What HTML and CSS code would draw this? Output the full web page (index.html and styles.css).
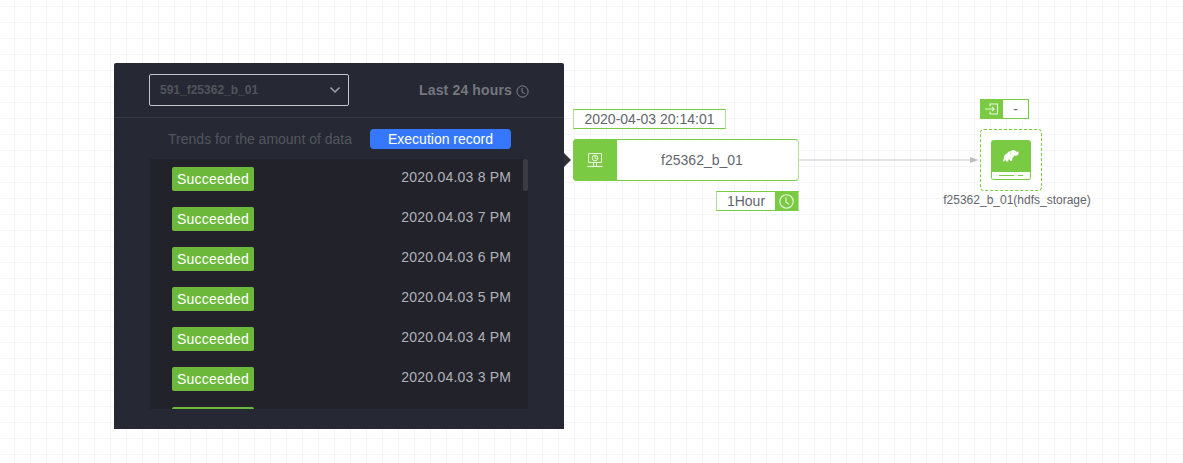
FILE: index.html
```html
<!DOCTYPE html>
<html lang="en">
<head>
<meta charset="utf-8">
<title>Data flow</title>
<link rel="stylesheet" href="styles.css">
</head>
<body>
<main class="canvas">
  <section class="panel">
    <header class="panel-head">
      <div class="select"><span>591_f25362_b_01</span>
        <svg width="12" height="8" viewBox="0 0 12 8"><path d="M1.5 1.500 6 6l4.500-4.500" fill="none" stroke="#a0a2aa" stroke-width="1.500"/></svg>
      </div>
      <div class="range"><span>Last 24 hours</span>
        <svg width="13" height="13" viewBox="0 0 13 13" fill="none" stroke="#85868d"><circle cx="6.500" cy="6.500" r="5.600"/><path d="M6 3v4l2.800 1.700"/></svg>
      </div>
    </header>
    <nav class="tabs"><span class="tab">Trends for the amount of data</span><span class="tab active">Execution record</span></nav>
    <div class="records">
      <div class="record"><span class="tag">Succeeded</span><time>2020.04.03 8 PM</time></div>
      <div class="record"><span class="tag">Succeeded</span><time>2020.04.03 7 PM</time></div>
      <div class="record"><span class="tag">Succeeded</span><time>2020.04.03 6 PM</time></div>
      <div class="record"><span class="tag">Succeeded</span><time>2020.04.03 5 PM</time></div>
      <div class="record"><span class="tag">Succeeded</span><time>2020.04.03 4 PM</time></div>
      <div class="record"><span class="tag">Succeeded</span><time>2020.04.03 3 PM</time></div>
      <div class="record"><span class="tag"></span></div>
      <i class="thumb"></i>
    </div>
    <i class="pointer"></i>
  </section>

  <section class="task">
    <div class="stamp">2020-04-03 20:14:01</div>
    <div class="node">
      <div class="node-icon">
        <svg width="16" height="16" viewBox="0 0 16 16" fill="none" stroke="#e9f7e0"><path d="M1.500 1.500h13v9h-13zM6.500 11v3M9.500 11v3"/><path d="M.5 14.500h15" stroke-width="1.200"/><circle cx="8" cy="6" r="2.800"/><path d="M8 4v2.300h1.500"/></svg>
      </div>
      <div class="node-name">f25362_b_01</div>
    </div>
    <div class="period"><span>1Hour</span>
      <div class="period-icon"><svg width="15" height="15" viewBox="0 0 15 15" fill="none" stroke="#e9f7e0" stroke-width="1.100"><circle cx="7.500" cy="7.500" r="6.700"/><path d="M7 3.200v5l3.200 2"/></svg></div>
    </div>
  </section>

  <svg class="link" width="181" height="8" viewBox="0 0 181 8"><path d="M0 4h174" stroke="#d8d9df" stroke-width="1.500"/><path d="m172 1 8.500 3-8.500 3z" fill="#bcbec5"/></svg>

  <section class="storage">
    <div class="io">
      <div class="io-icon"><svg width="14" height="12" viewBox="0 0 14 12" fill="none" stroke="#e9f7e0" stroke-width="1.100"><path d="M5 3.500V1h7.500v10H5V8.500M0 6h9M7 3.800 9.200 6 7 8.200"/></svg></div>
      <span>-</span>
    </div>
    <div class="drop">
      <svg width="40" height="40" viewBox="0 0 40 40">
        <rect width="40" height="40" rx="3" fill="#7acb43"/>
        <path d="M1 32h38v5.500q0 1.500-1.500 1.500h-35Q1 39 1 37.500z" fill="#fff"/>
        <path d="M8 35.500h15M27 35.500h5" stroke="#7acb43"/>
        <path d="M13 17.500q0-3 3-4 1-2.500 4-2.500.8-1.200 2.500-1 2 0 2.500 1.500l1.400.4.600-1q1.300 2.500-.2 4.200-1.500 1.200-3.500.4l-.8 1.500-1 .5-.5 3.500h-2l-.2-1.800-1.300.2-.3 2.100h-2l-.2-2-1 1.500-1-.6v1h-1z" fill="#fff"/>
        <path d="M19.500 11.500q-.5 3 2 3.500M23.500 12.500v.8" fill="none" stroke="#a8dc84" stroke-width=".6"/>
      </svg>
    </div>
    <div class="storage-name">f25362_b_01(hdfs_storage)</div>
  </section>
</main>
</body>
</html>
```
FILE: styles.css
```css
* { box-sizing: border-box; }
body { margin: 0; font: 14px/20px "Liberation Sans", Arial, sans-serif; color: #63656e; }
svg { display: block; flex: none; }
.canvas {
  position: relative; height: 463px; overflow: hidden; background-color: #fff;
  background-image: linear-gradient(#f5f5f5 1px, transparent 1px), linear-gradient(90deg, #f5f5f5 1px, transparent 1px);
  background-size: 16px 16px; background-position: 14px 6px;
}
.panel { position: absolute; left: 114px; top: 63px; width: 450px; height: 366px; background: #262833; border-radius: 2px 2px 0 0; }
.panel-head { display: flex; align-items: center; justify-content: space-between; height: 55px; padding: 0 35px; border-bottom: 1px solid #373944; }
.select { display: flex; align-items: center; justify-content: space-between; width: 200px; height: 32px; padding: 0 7px 0 10px; border: 1px solid #c4c6cc; border-radius: 2px; font-size: 12px; font-weight: bold; color: #52545d; }
.range { display: flex; align-items: center; gap: 4px; font-weight: bold; letter-spacing: .15px; color: #75777e; }
.range svg { margin-top: 2px; }
.tabs { display: flex; justify-content: flex-end; gap: 18px; padding: 11px 53px 0 0; }
.tab { height: 20px; color: #54565f; white-space: nowrap; }
.tab.active { width: 141px; border-radius: 4px; background: #3578ff; color: #fff; text-align: center; }
.records { position: relative; height: 250px; margin: 10px 36px 0; padding-top: 8px; overflow: hidden; background: #22222a; }
.record { display: flex; justify-content: space-between; height: 40px; padding: 0 17px 0 22px; color: #b0b2ba; }
.record time { letter-spacing: .22px; margin-right: -.22px; }
.tag { width: 82px; height: 24px; border-radius: 2px; background: #6bb83a; color: #fff; line-height: 25px; letter-spacing: .2px; text-align: center; }
.thumb { position: absolute; top: 0; right: 0; width: 5px; height: 32px; border-radius: 2px; background: #3c3c44; }
.pointer { position: absolute; left: 450px; top: 90px; border: 7px solid transparent; border-left-color: #303036; border-right: 0; }
.task { position: absolute; left: 573px; top: 109px; width: 226px; display: flex; flex-direction: column; align-items: flex-start; gap: 10px; }
.stamp { width: 153px; height: 20px; border: 1px solid; border-color: #7acb43 #b4e292; background: #fff; line-height: 19px; text-align: center; }
.node { display: flex; width: 226px; height: 42px; border: 1px solid; border-color: #7acb43 #b4e292; border-radius: 4px; background: #fff; }
.node-icon { display: flex; align-items: center; justify-content: center; width: 44px; margin: -1px 0 -1px -1px; border-radius: 4px 0 0 4px; background: #7acb43; }
.node-name { flex: 1; padding-right: 11px; line-height: 41px; text-align: center; }
.period { align-self: flex-end; display: flex; width: 83px; height: 20px; border: 1px solid; border-color: #7acb43 #b4e292; background: #fff; line-height: 19px; }
.period span { flex: 1; text-align: center; }
.period-icon { display: flex; align-items: center; justify-content: center; width: 23px; background: #7acb43; }
.link { position: absolute; left: 798px; top: 156px; }
.storage { position: absolute; left: 937px; top: 99px; width: 160px; }
.io { display: flex; width: 49px; height: 20px; margin-left: 43px; border: 1px solid #7acb43; background: #fff; line-height: 18px; text-align: center; }
.io-icon { display: flex; align-items: center; justify-content: center; width: 22px; background: #7acb43; }
.io span { flex: 1; }
.drop { display: flex; align-items: center; justify-content: center; width: 62px; height: 62px; margin: 10px 0 0 43px; border: 1px dashed #7acb43; border-radius: 4px; background: #fff; }
.storage-name { margin-top: -1px; font-size: 12px; text-align: center; white-space: nowrap; }
```
